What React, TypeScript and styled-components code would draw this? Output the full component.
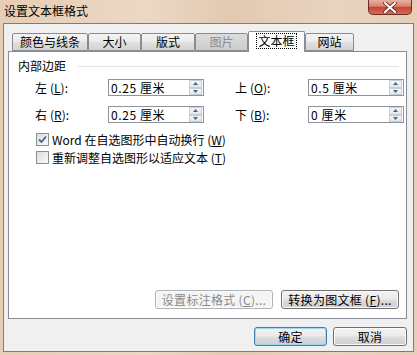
import React from "react";
import styled, { createGlobalStyle } from "styled-components";

const GlobalStyle = createGlobalStyle`
  html, body {
    margin: 0;
    padding: 0;
  }
  body {
    background: #e6cfb9;
    font-family: "Noto Sans CJK SC", "Liberation Sans", sans-serif;
    font-size: 12px;
    color: #000;
  }
`;

const Window = styled.div`
  width: 417px;
  height: 355px;
  box-sizing: border-box;
  display: flex;
  flex-direction: column;
  padding: 0 3px 3px 3px;
  background: linear-gradient(90deg, #e6cdb5, #ebd8c5 35%, #e2c9b0 55%, #e9d4c0 80%, #e5ceb8);
`;

const TitleBar = styled.div`
  height: 23px;
  display: flex;
  align-items: flex-start;
  justify-content: space-between;
`;

const Title = styled.div`
  padding: 4px 0 0 1px;
  font-size: 12px;
  line-height: 14px;
`;

const CloseButton = styled.div`
  width: 44px;
  height: 15px;
  margin-right: 2px;
  box-sizing: border-box;
  border: 1px solid #6b2f28;
  border-top: none;
  border-radius: 0 0 5px 5px;
  background: linear-gradient(#eab0a2, #d98271 45%, #c7452f 52%, #d56c59);
  display: flex;
  align-items: center;
  justify-content: center;
`;

const Client = styled.div`
  flex: 1;
  background: #f0f0f0;
  border: 1px solid #8a7a6b;
  display: flex;
  flex-direction: column;
  padding: 7px 6px 0 4px;
`;

const TabRow = styled.div`
  display: flex;
  align-items: flex-end;
  height: 20px;
  padding-left: 4px;
`;

const Tab = styled.div<{ $w: number; $active?: boolean; $disabled?: boolean }>`
  width: ${(p) => p.$w}px;
  height: ${(p) => (p.$active ? 21 : 18)}px;
  margin-bottom: ${(p) => (p.$active ? -1 : 0)}px;
  position: relative;
  z-index: ${(p) => (p.$active ? 2 : 0)};
  box-sizing: border-box;
  border: 1px solid #898c95;
  border-bottom: ${(p) => (p.$active ? "none" : "1px solid #898c95")};
  border-radius: 2px 2px 0 0;
  background: ${(p) =>
    p.$active
      ? "#fff"
      : p.$disabled
      ? "linear-gradient(#dcdcdc, #cdcdcd)"
      : "linear-gradient(#f3f3f3, #ececec 45%, #dedede 55%, #d4d4d4)"};
  color: ${(p) => (p.$disabled ? "#8d8d8d" : "#000")};
  display: flex;
  align-items: center;
  justify-content: center;
  line-height: 14px;
  padding-bottom: ${(p) => (p.$active ? 2 : 0)}px;
`;

const FocusText = styled.span`
  outline: 1px dotted #000;
  outline-offset: 0;
  padding: 0 1px;
`;

const Panel = styled.div`
  height: 268px;
  box-sizing: border-box;
  border: 1px solid #898c95;
  background: #fff;
  display: flex;
  flex-direction: column;
  padding: 7px 7px 9px 9px;
`;

const GroupHeader = styled.div`
  display: flex;
  align-items: center;
  height: 14px;
  line-height: 14px;
`;

const GroupLine = styled.div`
  flex: 1;
  height: 1px;
  background: #dce4e9;
  margin-left: 12px;
`;

const FormGrid = styled.div`
  display: grid;
  grid-template-columns: 73px 96px 31px 73px 96px;
  grid-auto-rows: 17px;
  row-gap: 10px;
  margin: 6px 0 0 17px;
  align-items: center;
`;

const FieldLabel = styled.div`
  line-height: 14px;
`;

const KeyHint = styled.span`
  margin-left: 3px;
`;

const SpinBox = styled.div`
  display: flex;
  align-items: center;
  height: 17px;
  box-sizing: border-box;
  border: 1px solid #8f939a;
  background: #fff;
  padding-left: 2px;
`;

const SpinValue = styled.div`
  flex: 1;
  line-height: 14px;
  white-space: nowrap;
  letter-spacing: 0.6px;
`;

const SpinButtons = styled.div`
  display: flex;
  flex-direction: column;
  width: 13px;
  height: 15px;
  margin-right: 1px;
`;

const SpinButton = styled.div`
  flex: 1;
  box-sizing: border-box;
  border: 1px solid #c6ced7;
  background: linear-gradient(#f4f7fa, #dfe6ee);
  display: flex;
  align-items: center;
  justify-content: center;
`;

const CheckList = styled.div`
  display: flex;
  flex-direction: column;
  gap: 5px;
  margin: 10px 0 0 18px;
`;

const CheckRow = styled.div`
  display: flex;
  align-items: center;
  height: 13px;
  line-height: 14px;
  white-space: pre;
`;

const CheckBox = styled.div`
  width: 13px;
  height: 13px;
  box-sizing: border-box;
  border: 1px solid #8e8f8f;
  background: linear-gradient(135deg, #dcdcdc, #fbfbfb);
  display: flex;
  align-items: center;
  justify-content: center;
  margin-right: 3px;
`;

const Spacer = styled.div`
  flex: 1;
`;

const ButtonRow = styled.div<{ $gap: number }>`
  display: flex;
  justify-content: flex-end;
  gap: ${(p) => p.$gap}px;
`;

const Button = styled.div<{ $w: number; $disabled?: boolean; $default?: boolean }>`
  width: ${(p) => p.$w}px;
  height: 19px;
  box-sizing: border-box;
  border: 1px solid ${(p) => (p.$disabled ? "#adb2b5" : p.$default ? "#3c7fb1" : "#707070")};
  border-radius: 3px;
  background: ${(p) =>
    p.$disabled
      ? "#f4f4f4"
      : "linear-gradient(#f2f2f2, #ebebeb 48%, #dddddd 52%, #cfcfcf)"};
  box-shadow: ${(p) => (p.$default ? "inset 0 0 0 1px #9fd6f3" : "inset 0 0 0 1px #fcfcfc")};
  color: ${(p) => (p.$disabled ? "#8a8a8a" : "#000")};
  display: flex;
  align-items: center;
  justify-content: center;
  line-height: 14px;
  white-space: nowrap;
  letter-spacing: 0.3px;
`;

const Footer = styled.div`
  margin-top: 8px;
`;

const Arrow = ({ up }: { up?: boolean }) => (
  <svg width="5" height="3" viewBox="0 0 5 3">
    <path d={up ? "M0 3 L2.5 0 L5 3 Z" : "M0 0 L2.5 3 L5 0 Z"} fill="#4d6185" />
  </svg>
);

const Field = ({ label, keyChar, value }: { label: string; keyChar: string; value: string }) => (
  <>
    <FieldLabel>
      {label}
      <KeyHint>
        (<u>{keyChar}</u>):
      </KeyHint>
    </FieldLabel>
    <SpinBox>
      <SpinValue>{value}</SpinValue>
      <SpinButtons>
        <SpinButton>
          <Arrow up />
        </SpinButton>
        <SpinButton>
          <Arrow />
        </SpinButton>
      </SpinButtons>
    </SpinBox>
  </>
);

export default function App() {
  return (
    <>
      <GlobalStyle />
      <Window>
        <TitleBar>
          <Title>设置文本框格式</Title>
          <CloseButton>
            <svg width="14" height="11" viewBox="0 0 14 11">
              <path d="M2 1 L12 10 M12 1 L2 10" stroke="#5a2620" strokeWidth="3.6" strokeLinecap="round" />
              <path d="M2 1 L12 10 M12 1 L2 10" stroke="#fff" strokeWidth="2" strokeLinecap="round" />
            </svg>
          </CloseButton>
        </TitleBar>
        <Client>
          <TabRow>
            <Tab $w={76}>颜色与线条</Tab>
            <Tab $w={53}>大小</Tab>
            <Tab $w={54}>版式</Tab>
            <Tab $w={53} $disabled>
              图片
            </Tab>
            <Tab $w={57} $active>
              <FocusText>文本框</FocusText>
            </Tab>
            <Tab $w={49}>网站</Tab>
          </TabRow>
          <Panel>
            <GroupHeader>
              内部边距
              <GroupLine />
            </GroupHeader>
            <FormGrid>
              <Field label="左" keyChar="L" value="0.25 厘米" />
              <div />
              <Field label="上" keyChar="O" value="0.5 厘米" />
              <Field label="右" keyChar="R" value="0.25 厘米" />
              <div />
              <Field label="下" keyChar="B" value="0 厘米" />
            </FormGrid>
            <CheckList>
              <CheckRow>
                <CheckBox>
                  <svg width="9" height="9" viewBox="0 0 9 9">
                    <path d="M1 4.5 L3.5 7 L8 1.5" stroke="#4a5f97" strokeWidth="1.8" fill="none" />
                  </svg>
                </CheckBox>
                Word 在自选图形中自动换行 (<u>W</u>)
              </CheckRow>
              <CheckRow>
                <CheckBox />
                重新调整自选图形以适应文本 (<u>T</u>)
              </CheckRow>
            </CheckList>
            <Spacer />
            <ButtonRow $gap={8}>
              <Button $w={118} $disabled>
                设置标注格式 (<u>C</u>)...
              </Button>
              <Button $w={118}>
                转换为图文框 (<u>F</u>)...
              </Button>
            </ButtonRow>
          </Panel>
          <Footer>
            <ButtonRow $gap={6}>
              <Button $w={73} $default>
                确定
              </Button>
              <Button $w={74}>取消</Button>
            </ButtonRow>
          </Footer>
        </Client>
      </Window>
    </>
  );
}
